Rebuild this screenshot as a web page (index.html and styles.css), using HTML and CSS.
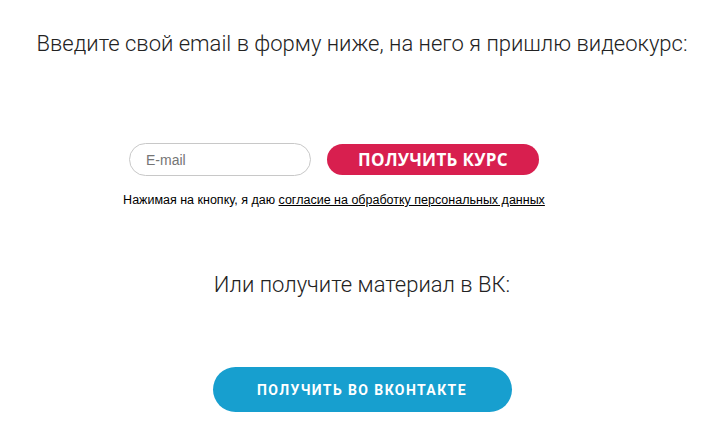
FILE: index.html
```html
<!DOCTYPE html>
<html lang="ru">
<head>
    <meta charset="UTF-8">
    <meta name="viewport" content="width=device-width, initial-scale=1.0">
    <title>Получить видеокурс</title>
    <link rel="stylesheet" href="styles.css">
</head>
<body>

    <div class="container">
        <div class="header-text">Введите свой email в форму ниже, на него я пришлю видеокурс:</div>

        <!-- Форма подписки -->
        <form class="subscribe-form" onsubmit="return false;">
            <div class="form-row">
                <input type="email" class="email-input" placeholder="E-mail">
                <button type="submit" class="course-button">ПОЛУЧИТЬ КУРС</button>
            </div>
            <div class="consent-text">Нажимая на кнопку, я даю <a href="#">согласие на обработку персональных данных</a></div>
        </form>

        <div class="vk-text">Или получите материал в ВК:</div>

        <a class="vk-button" href="#">ПОЛУЧИТЬ ВО ВКОНТАКТЕ</a>
    </div>

</body>
</html>
```

FILE: styles.css
```css
/* Общие стили */
body {
    font-family: 'Roboto', sans-serif;
    margin: 0;
    padding: 0;
    background: #fff;
    color: #222;
}

.container {
    display: flex;
    flex-direction: column;
    align-items: center;
    width: 100%;
}

.header-text {
    font-size: 22px;
    font-weight: 300;
    line-height: 30px;
    margin-top: 29px;
    color: #222;
}

.subscribe-form {
    display: flex;
    flex-direction: column;
    align-items: center;
    margin-top: 84px;
    margin-right: 56px; /* блок формы немного смещён влево */
}

.form-row {
    display: flex;
    align-items: center;
    gap: 16px;
}

.email-input {
    box-sizing: border-box;
    width: 182px;
    height: 33px;
    border: 1px solid #c8c8c8;
    border-radius: 17px;
    padding: 0 16px;
    font-family: 'Liberation Sans', Arial, sans-serif;
    font-size: 14px;
    color: #333;
    outline: none;
}

.email-input::placeholder {
    color: #757575;
}

.course-button {
    width: 212px;
    height: 31px;
    border: none;
    border-radius: 16px;
    background-color: #d81f4f;
    color: #fff;
    font-family: 'Open Sans', sans-serif;
    font-weight: 700;
    font-size: 17px;
    letter-spacing: 0.3px;
    padding: 0;
    cursor: pointer;
}

.consent-text {
    font-family: 'Liberation Sans', Arial, sans-serif;
    font-size: 12.5px;
    line-height: 14px;
    color: #000;
    margin-top: 17px;
}

.consent-text a {
    color: #000;
    text-decoration: underline;
}

.vk-text {
    font-size: 22px;
    font-weight: 300;
    line-height: 28px;
    margin-top: 64px;
    color: #222;
}

/* Кнопка ВК */
.vk-button {
    display: flex;
    justify-content: center;
    align-items: center;
    width: 299px;
    height: 45px;
    margin-top: 68px;
    border-radius: 23px;
    background-color: #179fcf;
    color: #fff;
    font-family: 'Roboto', sans-serif;
    font-weight: 700;
    font-size: 14px;
    letter-spacing: 1.4px;
    text-decoration: none;
}
```
